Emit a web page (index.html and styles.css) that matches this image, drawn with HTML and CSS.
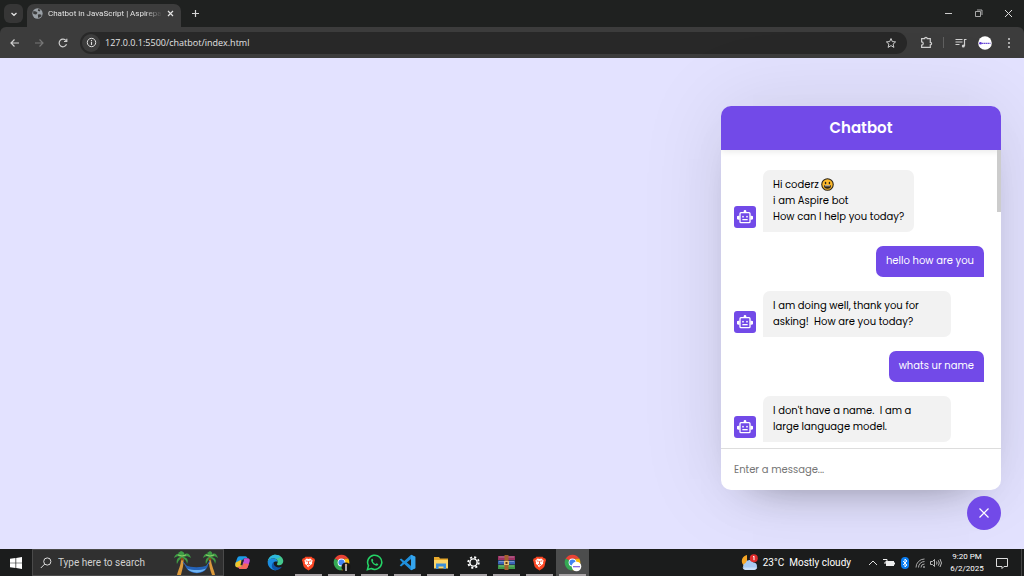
FILE: index.html
```html
<!DOCTYPE html>
<html lang="en">
<head>
  <meta charset="UTF-8" />
  <meta name="viewport" content="width=device-width, initial-scale=1.0"/>
  <title>Chatbot in JavaScript</title>
  <link rel="stylesheet" href="styles.css">
</head>
<body>

  <!-- shared icon shapes -->
  <svg class="sprite" width="0" height="0" aria-hidden="true">
    <symbol id="robot" viewBox="0 0 24 24">
      <rect x="4.500" y="5.500" width="15" height="15" rx="1.500" fill="none" stroke="currentColor" stroke-width="2"/>
      <path d="M10 5V3.500a2 2 0 0 1 4 0V5zM4 10H2.500a1.500 1.500 0 0 0 0 6H4zM20 10h1.500a1.500 1.500 0 0 1 0 6H20z" fill="currentColor"/>
      <circle cx="9" cy="11.500" r="1.300" fill="currentColor"/>
      <circle cx="15" cy="11.500" r="1.300" fill="currentColor"/>
      <path d="M8 16h8" stroke="currentColor" stroke-width="2"/>
    </symbol>
    <symbol id="brave" viewBox="0 0 24 24">
      <path d="M7 2h10l2 2.500 2-.3 1.500 3.300-.8 2L20 17c-.6 2.400-5 4.700-8 7-3-2.300-7.400-4.600-8-7L2.300 9.500l-.8-2L3 4.200l2 .3z" fill="#fb4522"/>
      <path d="M12 5.500l3-.7 3.800 3.500-1.200 2.200.3 2.500-3.400 3-2.500 1.500L12 19l-2-1.500L9.500 16l-3.400-3 .3-2.500-1.200-2.200L9 4.800z" fill="#fff"/>
      <path d="M7.500 8.500l3 .8M16.500 8.500l-3 .8M12 9v5M9.500 14L12 15l2.500-1" stroke="#fb4522" stroke-width="1.400" fill="none"/>
    </symbol>
    <symbol id="chrome" viewBox="0 0 24 24">
      <path d="M12 12L2.470 6.500A11 11 0 0 1 21.530 6.500H12z" fill="#ea4335"/>
      <path d="M2.470 6.500A11 11 0 0 0 12 23l5-8.500L12 12z" fill="#34a853"/>
      <path d="M21.530 6.500A11 11 0 0 1 12 23l5-8.500-1-8z" fill="#fbbc05"/>
      <path d="M12 6.500h9.500" stroke="#ea4335" stroke-width="1"/>
      <circle cx="12" cy="12" r="5.500" fill="#fff"/>
      <circle cx="12" cy="12" r="4.300" fill="#4285f4"/>
    </symbol>
  </svg>

  <div class="browser">
    <div class="tab-strip">
      <button class="tab-search" aria-label="Search tabs">
        <svg width="8" height="8" viewBox="0 0 8 8"><path d="M1.500 3L4 5.300 6.500 3" fill="none" stroke="#e3e3e3" stroke-width="1.300"/></svg>
      </button>
      <div class="tab">
        <svg width="11" height="11" viewBox="0 0 16 16"><circle cx="8" cy="8" r="7.500" fill="#9aa0a6"/><path d="M2 4.500l4 .5 2 2-1.500 2-2 .3L1.500 8zM9 1.500l3.500 1L11 5 8.500 4zM8.500 9.500l3-.5 2.500 1-1.500 3L9 14.500z" fill="#3c3c3c"/></svg>
        <span class="tab-title">Chatbot in JavaScript | Aspirepa</span>
        <button aria-label="Close tab">
          <svg width="7" height="7" viewBox="0 0 7 7"><path d="M1 1l5 5M6 1L1 6" stroke="#e3e3e3" stroke-width="1.200"/></svg>
        </button>
      </div>
      <button class="new-tab" aria-label="New tab">
        <svg width="9" height="9" viewBox="0 0 9 9"><path d="M4.500 1v7M1 4.500h7" stroke="#d5d5d5" stroke-width="1.200"/></svg>
      </button>
      <div class="window-controls">
        <button aria-label="Minimize"><svg width="9" height="9" viewBox="0 0 9 9"><path d="M1 4.500h7" stroke="#ccc"/></svg></button>
        <button aria-label="Restore"><svg width="9" height="9" viewBox="0 0 9 9"><path d="M1.500 2.500h5v5h-5zM3 1h5v5" fill="none" stroke="#ccc" stroke-width=".8"/></svg></button>
        <button aria-label="Close"><svg width="9" height="9" viewBox="0 0 9 9"><path d="M1 1l7 7M8 1L1 8" stroke="#ddd"/></svg></button>
      </div>
    </div>
    <div class="toolbar">
      <button aria-label="Back"><svg width="12" height="12" viewBox="0 0 12 12"><path d="M10 6H2M5.500 2.500L2 6l3.500 3.500" fill="none" stroke="#d0d0d0" stroke-width="1.200"/></svg></button>
      <button aria-label="Forward"><svg width="12" height="12" viewBox="0 0 12 12"><path d="M2 6h8M6.500 2.500L10 6 6.500 9.500" fill="none" stroke="#777" stroke-width="1.200"/></svg></button>
      <button aria-label="Reload"><svg width="12" height="12" viewBox="0 0 12 12"><path d="M9.500 7.300A3.800 3.800 0 1 1 9 3.700M9.800 1.800v2.700H7" fill="none" stroke="#d0d0d0" stroke-width="1.200"/></svg></button>
      <div class="address">
        <button class="site-info" aria-label="View site information">
          <svg width="11" height="11" viewBox="0 0 11 11"><circle cx="5.500" cy="5.500" r="4.200" fill="none" stroke="#ddd"/><path d="M5.500 5v3M5.500 3v1.200" stroke="#ddd" stroke-width="1.100"/></svg>
        </button>
        <input type="text" aria-label="Address" value="127.0.0.1:5500/chatbot/index.html">
        <button aria-label="Bookmark"><svg width="12" height="12" viewBox="0 0 12 12"><path d="M6 1.500l1.300 3.100 3.300.3-2.500 2.200.8 3.300L6 8.600l-2.900 1.800.8-3.300L1.400 4.900l3.300-.3z" fill="none" stroke="#d0d0d0"/></svg></button>
      </div>
      <button class="extensions" aria-label="Extensions"><svg width="13" height="13" viewBox="0 0 12 12"><path d="M1.500 2.500h2.800a1.200 1.200 0 0 1 2.400 0h2.800v3.300a1.200 1.200 0 0 1 0 2.400v2.300h-8V8.500a1.500 1.500 0 0 0 0-3z" fill="none" stroke="#d0d0d0" stroke-width="1.100"/></svg></button>
      <span class="divider"></span>
      <button class="media" aria-label="Media"><svg width="12" height="12" viewBox="0 0 12 12"><path d="M.5 2.500h7M.5 5h7M.5 7.500h4M9.500 9V2.500h2" fill="none" stroke="#d0d0d0" stroke-width="1.200"/><circle cx="8.300" cy="9" r="1.500" fill="#d0d0d0"/></svg></button>
      <button class="profile" aria-label="Profile"><svg width="14" height="14" viewBox="0 0 14 14"><circle cx="7" cy="7" r="6.800" fill="#fff"/><circle cx="2.500" cy="7.300" r="1.300" fill="#5b35d5"/><path d="M4 7.400h8.500" stroke="#6d50d8" stroke-width="1.300" stroke-dasharray="1.500 .4"/></svg></button>
      <button aria-label="Menu"><svg width="12" height="12" viewBox="0 0 12 12" fill="#d0d0d0"><circle cx="6" cy="2" r="1"/><circle cx="6" cy="6" r="1"/><circle cx="6" cy="10" r="1"/></svg></button>
    </div>
  </div>

  <main class="page">
    <section class="chatbot">
      <header><h2>Chatbot</h2></header>
      <div class="chat-body">
        <ul class="chatbox">
          <li class="chat incoming">
            <span class="avatar"><svg width="16" height="16"><use href="#robot"/></svg></span>
            <p>Hi coderz <svg class="emoji" width="13" height="13" viewBox="0 0 12 12"><circle cx="6" cy="6" r="5.300" fill="#fdb92b" stroke="#2b2418"/><ellipse cx="4.200" cy="4.600" rx=".7" ry="1.100" fill="#2b2418"/><ellipse cx="7.800" cy="4.600" rx=".7" ry="1.100" fill="#2b2418"/><path d="M2.700 6.600h6.600A3.300 3.300 0 0 1 2.700 6.600z" fill="#2b2418"/><path d="M3.500 6.900h5v.8h-5z" fill="#fff"/></svg><br>i am Aspire bot<br>How can I help you today?</p>
          </li>
          <li class="chat outgoing"><p>hello how are you</p></li>
          <li class="chat incoming">
            <span class="avatar"><svg width="16" height="16"><use href="#robot"/></svg></span>
            <p class="long">I am doing well, thank you for<br>asking!&nbsp; How are you today?</p>
          </li>
          <li class="chat outgoing"><p>whats ur name</p></li>
          <li class="chat incoming">
            <span class="avatar"><svg width="16" height="16"><use href="#robot"/></svg></span>
            <p class="long">I don't have a name.&nbsp; I am a<br>large language model.</p>
          </li>
        </ul>
        <span class="scroll-thumb"></span>
      </div>
      <form class="chat-input">
        <textarea rows="1" placeholder="Enter a message..." aria-label="Message"></textarea>
      </form>
    </section>
    <button class="chatbot-toggler" aria-label="Close chat">
      <svg width="12" height="12" viewBox="0 0 12 12"><path d="M1.500 1.500l9 9M10.500 1.500l-9 9" stroke="#fff" stroke-width="1.200"/></svg>
    </button>
  </main>

  <footer class="taskbar">
    <button class="start" aria-label="Start"><svg width="12" height="12" viewBox="0 0 12 12" fill="#fff"><path d="M0 1.700L5.500 1v4.700H0zM6.200.9L12 0v5.700H6.200zM0 6.300h5.500V11L0 10.300zM6.200 6.300H12V12l-5.800-.9z"/></svg></button>
    <label class="search">
      <svg width="12" height="12" viewBox="0 0 12 12"><circle cx="7.300" cy="4.500" r="3.600" fill="none" stroke="#ddd"/><path d="M4.700 7.100L.8 11" stroke="#ddd"/></svg>
      <input type="text" placeholder="Type here to search" aria-label="Type here to search">
      <svg width="46" height="24" viewBox="0 0 46 24">
        <path d="M4 24c1-5 4-9 4-16h2.500C11 14 9 19 8 24zM42 24c-1-6-4-10-4-16h-2c-.5 5 1 11 3 16z" fill="#dc9a3c"/>
        <path d="M10 11l4 5M37 10l-4 6" fill="none" stroke="#3a6fc0"/>
        <path d="M12 14c7 3 16 3 23 0-2 11-20 11-23 0z" fill="#2563b8"/>
        <path d="M14 17.500c6 2 13 2 19 0-3 5.500-15 5.500-19 0z" fill="#6fb4f2"/>
        <path d="M9 5C6 1 2 3 1 7c3-2 5-2 6-1-3 1-4 4-3 7 2-4 3-5 5-6 3 1 5 3 5 6 2-4 0-6-3-7 2-1 4-1 7 1-1-4-4-6-7-3 1-2 0-3-3-4l-3 2z" fill="#3f9c45"/>
        <path d="M37 5c-3-4-6-2-7 2 3-2 4-2 6-1-3 1-4 4-3 7 2-4 3-5 4-6 3 1 5 3 5 6 2-4 0-6-3-7 2-1 3-1 6 1-1-4-4-6-6-3 1-2 0-3-2-4l-3 2z" fill="#3f9c45"/>
        <path d="M9 5l4-1M9 5L5 4M37 5l4-1M37 5l-4-1" stroke="#8fd06a" fill="none"/>
        <circle cx="9" cy="8" r="1.500" fill="#8a4b1d"/><circle cx="37" cy="8" r="1.500" fill="#8a4b1d"/>
      </svg>
    </label>
    <div class="apps">
      <button aria-label="Copilot"><svg width="17" height="17" viewBox="0 0 24 24"><path d="M8 3h8c2 0 2.500 1.500 3 3l-5 0-3.500 12H5c-3 0-4-2-3-5l2.500-7C5.300 4 6 3 8 3z" fill="#1c9be8"/><path d="M2.500 12L10 8l2 6-1.500 5H5c-3 0-4-3-2.500-7z" fill="#f0c52a"/><path d="M16 21H9c-2 0-2.500-1.500-3-3h5L14.500 6H19c3 0 4 2 3 5l-2.500 7c-.8 2-1.500 3-3.500 3z" fill="#c84fd0"/><path d="M14 13l7 1-1.500 4c-.8 2-1.500 3-3.500 3H9c-2 0-2.500-1.500-3-3h5z" fill="#f5675b"/><path d="M11 8h3l-2.500 8H9z" fill="#262626"/></svg></button>
      <button aria-label="Edge"><svg width="17" height="17" viewBox="0 0 24 24"><path d="M1 11C2 4 7 1 12 1c7 0 11 5 11 9 0 4-3 6-6 6-2 0-3-1-3-2 1-1 1-2 1-3 0-3-3-5-6-5-4 0-7 2-8 5z" fill="#45c98f"/><path d="M1 11C2 4 7 1 12 1c3 0 5 1 7 2.500C17 6 14 7 11 6 6 5 3 8 1 11z" fill="#2db7dc"/><path d="M1 12c0-4 4-6 8-6 3 0 6 2 6 5-5-2-8 2-6 7 1 3 3 4 4 5C6 23 1 18 1 12z" fill="#1b8de0"/><path d="M10 11c-2 5 3 10 11 7-2 3-5 5-9 5-6-1-7-9-2-12z" fill="#0f55a8"/></svg></button>
      <button class="open" aria-label="Brave"><svg width="15" height="16"><use href="#brave"/></svg></button>
      <button class="open" aria-label="Chrome, first profile"><svg width="18" height="18" viewBox="0 0 18 18"><use href="#chrome" width="17" height="17"/><circle cx="13" cy="13" r="4.500" fill="#171717"/><path d="M13 10v7" stroke="#ddd" stroke-width="1.500"/><circle cx="13" cy="11" r="1.200" fill="#c9a48c"/></svg></button>
      <button class="open" aria-label="WhatsApp"><svg width="17" height="17" viewBox="0 0 24 24"><path d="M2 22l1.500-5.500A10 10 0 1 1 7.500 20.500z" fill="none" stroke="#25d366" stroke-width="2.200"/><path d="M7.500 7.500c1-1.500 2-1 2.500.5.500 1.200 0 1.500-.5 2.200 1 2 2.300 3.300 4.300 4 .8-1 1.200-1.300 2-.8 2 .9 1.900 1.300.9 2.600-2.700 2.600-10.700-3.600-9.200-8.500z" fill="#25d366"/></svg></button>
      <button class="open" aria-label="Visual Studio Code"><svg width="17" height="17" viewBox="0 0 24 24"><path d="M17 1l6 3v16l-6 3L7.500 14 3 17.500 1 16.300 5 12 1 7.700 3 6.500 7.500 10zM17 7l-6 5 6 5z" fill="#1f8fdc" fill-rule="evenodd"/><path d="M17 1l6 3v16l-6 3z" fill="#35a5ee"/></svg></button>
      <button class="open" aria-label="File Explorer"><svg width="16" height="14" viewBox="0 0 16 14"><path d="M1 1h5l1 1.500h8V12H1z" fill="#e8a92c"/><path d="M1 4h14v8.500H1z" fill="#fcd567"/><path d="M3 7.500h10V13h-2.500v-2.500h-5V13H3z" fill="#3c8fd8"/></svg></button>
      <button class="open" aria-label="Settings"><svg width="13" height="13" viewBox="0 0 14 14"><circle cx="7" cy="7" r="5.700" fill="none" stroke="#fff" stroke-width="2" stroke-dasharray="2.240 2.240"/><circle cx="7" cy="7" r="3.900" fill="none" stroke="#fff" stroke-width="1.600"/></svg></button>
      <button class="open" aria-label="WinRAR"><svg width="17" height="15" viewBox="0 0 17 15"><path d="M0 1h17v4H0z" fill="#9c3264"/><path d="M0 5.500h17v4H0z" fill="#3b65b8"/><path d="M0 10h17v4H0z" fill="#3e9a48"/><path d="M1 2h15M1 6.500h15M1 11h15" stroke="#ffffff" stroke-opacity=".3"/><path d="M6.500 0h4v15h-4z" fill="#a4612d"/><path d="M6 6h5v4H6z" fill="#e6c173"/><path d="M7.500 7h2v2h-2z" fill="#593018"/></svg></button>
      <button class="open" aria-label="Brave window"><svg width="15" height="16"><use href="#brave"/></svg></button>
      <button class="open active" aria-label="Chrome, second profile"><svg width="18" height="18" viewBox="0 0 18 18"><use href="#chrome" width="17" height="17"/><circle cx="12.500" cy="12.500" r="4.800" fill="#fff"/><path d="M9 12.700h7" stroke="#7a5ce0" stroke-width="1.200"/></svg></button>
    </div>
    <div class="tray">
      <button class="weather">
        <svg width="17" height="17" viewBox="0 0 17 17"><path d="M6 1a6 6 0 1 0 6 9L6 7z" fill="#f5a524"/><path d="M4.500 16a3.700 3.700 0 0 1 0-7 4.300 4.300 0 0 1 8-.5 3.800 3.800 0 0 1 .5 7.500z" fill="#a9caf3"/><path d="M1.500 13.500h14.800A3.700 3.700 0 0 1 13 16H4.500a3.600 3.600 0 0 1-3-2.500z" fill="#c9def8"/><circle cx="12.800" cy="4.200" r="4" fill="#e02b2b"/><path d="M12 3l1-.8V6.200" stroke="#fff" fill="none"/></svg>
        <span>23°C</span><span>Mostly cloudy</span>
      </button>
      <button aria-label="Show hidden icons"><svg width="10" height="10" viewBox="0 0 10 10"><path d="M1 7l4-4 4 4" fill="none" stroke="#ddd"/></svg></button>
      <button aria-label="Battery"><svg width="12" height="10" viewBox="0 0 12 10"><path d="M3 3h8v5H3zM11 4.500h1v2h-1z" fill="#eee"/><path d="M0 1.500h4v2.500H2V6" fill="none" stroke="#eee"/></svg></button>
      <button aria-label="Bluetooth"><svg width="10" height="12" viewBox="-1 0 10 12"><rect width="8" height="12" rx="4" fill="#0a7cf0"/><path d="M2 4l4 4-2 2V2l2 2-4 4" fill="none" stroke="#fff" stroke-width=".9"/></svg></button>
      <button aria-label="Network"><svg width="10" height="10" viewBox="0 0 10 10" fill="none" stroke="#aaa"><path d="M1 9.500A8.500 8.500 0 0 1 9.500 1M3.500 9.500a6 6 0 0 1 6-6M6 9.500A3.500 3.500 0 0 1 9.500 6"/><circle cx="9" cy="9" r=".6"/></svg></button>
      <button aria-label="Volume"><svg width="12" height="10" viewBox="0 0 12 10" fill="none" stroke="#ccc" stroke-width=".9"><path d="M.5 3.500h2l2-2v7l-2-2h-2zM6.500 3.500q1 1.500 0 3M8.300 2.300q2 2.700 0 5.400M10 1q3 4 0 8"/></svg></button>
      <button class="clock"><span>9:20 PM</span><span>6/2/2025</span></button>
      <button class="notifications" aria-label="Notifications"><svg width="12" height="12" viewBox="0 0 12 12"><path d="M.5 1.500h11v8H8l-2 2v-2H.5z" fill="none" stroke="#ddd"/></svg></button>
    </div>
  </footer>

</body>
</html>
```
FILE: styles.css
```css
* {
  margin: 0;
  padding: 0;
  box-sizing: border-box;
}

body {
  display: flex;
  flex-direction: column;
  height: 100vh;
  overflow: hidden;
  background: #e3e2ff;
  font-family: "Segoe UI", Roboto, "Open Sans", sans-serif;
}

button,
input,
textarea {
  font: inherit;
  color: inherit;
  background: none;
  border: none;
  outline: none;
}

button {
  display: flex;
  align-items: center;
  justify-content: center;
  flex-shrink: 0;
  cursor: pointer;
}

svg {
  flex-shrink: 0;
}

.sprite {
  position: absolute;
}

/* browser window */
.browser {
  background: #1f2120;
  color: #e3e3e3;
}

.tab-strip {
  display: flex;
  align-items: center;
  height: 27px;
  padding-left: 4px;
}

.tab-search {
  width: 19px;
  height: 19px;
  border-radius: 6px;
  background: #363636;
}

.tab {
  display: flex;
  align-items: center;
  align-self: flex-end;
  gap: 5px;
  width: 154px;
  height: 23px;
  margin-left: 4px;
  padding: 0 7px 4px 5px;
  border-radius: 7px 7px 0 0;
  background: #3c3c3c;
}

.tab-title {
  flex: 1;
  white-space: nowrap;
  font-size: 8px;
  mask-image: linear-gradient(to right, #000 85%, transparent);
}

.new-tab {
  width: 28px;
  height: 27px;
}

.window-controls {
  display: flex;
  margin-left: auto;
  padding-right: 1px;
}

.window-controls button {
  width: 30px;
  height: 27px;
}

.toolbar {
  display: flex;
  align-items: center;
  height: 31px;
  padding: 0 3px;
  border-radius: 6px 6px 0 0;
  background: #3c3c3c;
}

.toolbar > button {
  width: 24px;
  height: 24px;
}

.address {
  display: flex;
  align-items: center;
  flex: 1;
  height: 22px;
  margin-left: 5px;
  padding: 0 10px 0 2px;
  border-radius: 11px;
  background: #282828;
}

.address input {
  flex: 1;
  min-width: 0;
  padding: 0 5px;
  font-family: "Open Sans", sans-serif;
  font-size: 9px;
}

.site-info {
  width: 18px;
  height: 18px;
  border-radius: 50%;
  background: #3c3c3c;
}

.toolbar .extensions {
  margin-left: 7px;
}

.divider {
  width: 1px;
  height: 11px;
  margin: 0 5px;
  background: #606060;
}

/* chat widget */
.page {
  display: flex;
  flex: 1;
  flex-direction: column;
  align-items: flex-end;
  justify-content: flex-end;
  gap: 6px;
  min-height: 0;
  padding: 0 23px 19px;
  font-family: "Poppins", "Inter", sans-serif;
}

.chatbot {
  width: 280px;
  overflow: hidden;
  border-radius: 10px;
  background: #fff;
  box-shadow: 0 0 85px rgba(0, 0, 0, 0.1), 0 21px 43px -32px rgba(0, 0, 0, 0.5);
}

.chatbot header {
  position: relative;
  padding: 10px 0;
  text-align: center;
  color: #fff;
  background: #724ae8;
  box-shadow: 0 1px 7px rgba(0, 0, 0, 0.1);
}

.chatbot h2 {
  font-size: 15px;
  line-height: 24px;
  font-weight: 600;
}

.chat-body {
  position: relative;
}

.chatbox {
  display: flex;
  flex-direction: column;
  gap: 14px;
  padding: 20px 17px 6px 13px;
  list-style: none;
}

.chat {
  display: flex;
  align-items: flex-end;
  gap: 7px;
}

.outgoing {
  justify-content: flex-end;
}

.chat p {
  max-width: 75%;
  padding: 7px 10px;
  border-radius: 7px 7px 7px 0;
  background: #f2f2f2;
  font-size: 10px;
  line-height: 16px;
}

.chat .long {
  width: 75%;
}

.outgoing p {
  padding-bottom: 8px;
  border-radius: 7px 7px 0 7px;
  color: #fff;
  background: #724ae8;
}

.avatar {
  display: flex;
  align-items: center;
  justify-content: center;
  width: 22px;
  height: 22px;
  margin-bottom: 4px;
  border-radius: 3px;
  color: #fff;
  background: #724ae8;
}

.emoji {
  vertical-align: -3px;
}

.scroll-thumb {
  position: absolute;
  top: 0;
  right: 0;
  width: 4px;
  height: 62px;
  background: #ccc;
}

.chat-input {
  display: flex;
  padding: 12px 13px;
  border-top: 1px solid #ddd;
}

.chat-input textarea {
  flex: 1;
  height: 17px;
  overflow: hidden;
  resize: none;
  font-size: 10px;
  line-height: 17px;
}

.chat-input textarea::placeholder {
  color: #757575;
}

.chatbot-toggler {
  width: 34px;
  height: 34px;
  border-radius: 50%;
  background: #724ae8;
}

/* taskbar */
.taskbar {
  display: flex;
  height: 27px;
  color: #fff;
  background: #1b1c1c;
  font-size: 10px;
}

.start {
  width: 32px;
}

.search {
  display: flex;
  align-items: center;
  gap: 6px;
  width: 192px;
  padding: 0 4px 0 7px;
  border: 1px solid #4a4a4a;
  background: #303030;
}

.search input {
  flex: 1;
  min-width: 0;
}

.search input::placeholder {
  color: #d0d0d0;
}

.apps {
  display: flex;
  margin-left: 2px;
}

.apps button {
  position: relative;
  width: 33px;
}

.apps .open::after {
  content: "";
  position: absolute;
  right: 3px;
  bottom: 0;
  left: 3px;
  height: 2px;
  background: #a8a3a6;
}

.apps .active {
  background: #4c4d4d;
}

.tray {
  display: flex;
  gap: 5px;
  margin-left: auto;
  padding-right: 9px;
  border-right: 1px solid #444;
  margin-right: 2px;
}

.weather {
  gap: 5px;
  margin-right: 12px;
}

.clock {
  flex-direction: column;
  width: 40px;
  font-size: 8px;
  line-height: 12px;
}

.notifications {
  width: 20px;
}
```
